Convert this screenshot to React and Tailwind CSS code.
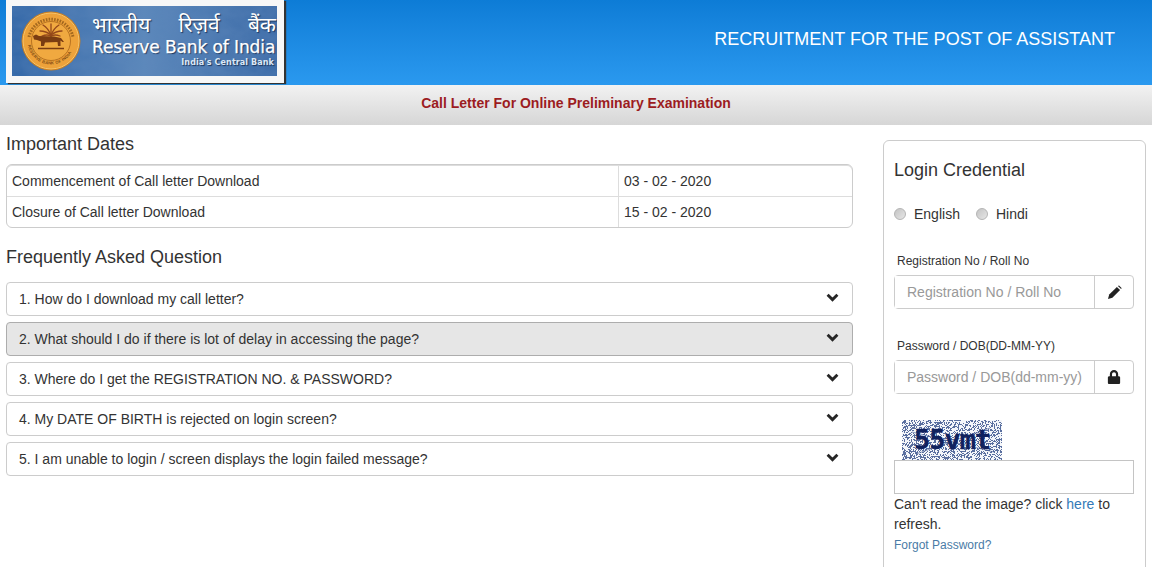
import { FaLock } from "react-icons/fa";

const FAQS = [
  "1. How do I download my call letter?",
  "2. What should I do if there is lot of delay in accessing the page?",
  "3. Where do I get the REGISTRATION NO. & PASSWORD?",
  "4. My DATE OF BIRTH is rejected on login screen?",
  "5. I am unable to login / screen displays the login failed message?",
];

const DATES = [
  ["Commencement of Call letter Download", "03 - 02 - 2020"],
  ["Closure of Call letter Download", "15 - 02 - 2020"],
];

// fixed pseudo random speckle for the captcha
const SPECKLE = [];
let seed = 12345;
for (let y = 0; y < 40; y++) {
  for (let x = 0; x < 100; x++) {
    seed = (seed * 1103515245 + 12345) & 0x7fffffff;
    if ((seed >> 16) % 100 < 42) SPECKLE.push([x, y]);
  }
}

function Seal() {
  return (
    <svg width="60" height="60" viewBox="0 0 60 60" className="shrink-0">
      <defs>
        <path id="ring-bottom" d="M6.5 30 A23.5 23.5 0 0 0 53.5 30" fill="none" />
      </defs>
      <circle cx="30" cy="30" r="29.5" fill="#c97f22" />
      <circle cx="30" cy="30" r="28" fill="#eda23a" stroke="#f7c56c" strokeWidth="1" />
      <circle cx="30" cy="30" r="19.5" fill="#f0a940" stroke="#a9661a" strokeWidth="0.8" />
      <text fontSize="4.2" fontWeight="700" fill="#7d4a12" fontFamily="Liberation Sans, sans-serif" letterSpacing="0.2">
        <textPath href="#ring-bottom" startOffset="6%">RESERVE BANK OF INDIA</textPath>
      </text>
      <path d="M8 26 A22.5 22.5 0 0 1 52 26" fill="none" stroke="#8a5416" strokeWidth="3" strokeDasharray="1.6 1.2" opacity="0.75" />
      <g stroke="#94481a" strokeWidth="1.3" fill="none" strokeLinecap="round">
        <path d="M30 25 L30 13" />
        <path d="M30 24 Q27 17 22 14" />
        <path d="M30 24 Q33 17 38 14" />
        <path d="M30 24 Q25 20 19 20" />
        <path d="M30 24 Q35 20 41 20" />
        <path d="M30 25 Q26 23 21 25" />
        <path d="M30 25 Q34 23 39 25" />
      </g>
      <path
        d="M12 25 L15 23.5 L18 25 L33 25.5 L40 27 L43 31 L41.5 31 L39.5 29.5 L39.5 35 L37 35 L36.5 31 L24 31.5 L23 35 L20 35 L20 30.5 L16 29 L13 28.5 Z"
        fill="#7a3c12"
      />
      <path d="M17 37.5 H43" stroke="#7a3c12" strokeWidth="1.5" />
    </svg>
  );
}

function Logo() {
  return (
    <div className="ml-[6px] h-[83px] w-[278px] bg-[#f7f7f7] pl-[6px] pt-[6px] shadow-[2px_1px_1px_#333]">
      <div className="relative flex h-[70px] w-[265px] items-center overflow-hidden bg-gradient-to-r from-[#3468a8] via-[#5c88bb] to-[#3d6ca8] pl-[9px]">
        <svg width="265" height="70" className="absolute inset-0 opacity-30">
          <filter id="mottle">
            <feTurbulence type="fractalNoise" baseFrequency="0.06 0.09" numOctaves="3" seed="4" />
            <feColorMatrix values="0 0 0 0 0.12  0 0 0 0 0.25  0 0 0 0 0.5  1.6 0 0 0 -0.3" />
          </filter>
          <rect width="265" height="70" filter="url(#mottle)" />
        </svg>
        <div className="relative">
          <Seal />
        </div>
        <div className="relative ml-[11px] w-[184px] pt-[4px] text-white [text-shadow:1px_1px_1px_#1c355c]">
          <div className="flex justify-between text-[21px] leading-[21px] font-['Noto_Sans_Devanagari','Noto_Sans',sans-serif]">
            <span>भारतीय</span>
            <span>रिज़र्व</span>
            <span>बैंक</span>
          </div>
          <div className="whitespace-nowrap text-[17px] leading-[19px] font-['DejaVu_Sans',sans-serif] tracking-[-0.1px] [-webkit-text-stroke:0.25px_#fff]">
            Reserve Bank of India
          </div>
          <div className="pr-[2px] text-right text-[8px] leading-[12px] font-['DejaVu_Sans',sans-serif] font-bold tracking-[0.1px] text-[#dce8f6]">
            India's Central Bank
          </div>
        </div>
      </div>
    </div>
  );
}

function Captcha() {
  return (
    <div className="relative ml-[8px] h-[40px] w-[100px] overflow-hidden bg-[#f4f6fa]">
      <svg width="100" height="40" className="absolute inset-0">
        {SPECKLE.map(([x, y]) => (
          <rect key={`${x}-${y}`} x={x} y={y} width="1" height="1" fill="#5a6f9f" />
        ))}
        <path d="M10 12 L92 32 M14 34 L88 8" stroke="#3d5590" strokeWidth="1" opacity="0.6" />
      </svg>
      <span className="absolute left-[12px] top-[4px] font-['DejaVu_Sans_Mono',monospace] text-[27px] leading-[32px] font-bold tracking-[-1px] text-[#10225e] [-webkit-text-stroke:0.3px_#10225e]">
        55vmt
      </span>
    </div>
  );
}

function Chevron() {
  return (
    <svg width="13" height="9" viewBox="0 0 13 9" className="mb-[4px] shrink-0">
      <path d="M1.6 1.8 L6.5 6.6 L11.4 1.8" fill="none" stroke="#262626" strokeWidth="2.9" />
    </svg>
  );
}

function Pencil() {
  return (
    <svg width="15" height="15" viewBox="0 0 15 15">
      <path d="M1 14 L2.2 9.6 L9.9 1.9 L13.1 5.1 L5.4 12.8 Z" fill="#222" />
      <path d="M10.9 0.9 L12 0.4 L14.6 3 L14.1 4.1 Z" fill="#222" />
    </svg>
  );
}

function InputGroup({ placeholder, icon }) {
  return (
    <div className="flex h-[34px] w-[240px] rounded border border-[#ccc]">
      <input
        placeholder={placeholder}
        className="w-[199px] min-w-0 bg-white px-3 text-[14px] outline-none placeholder:text-[#999]"
      />
      <div className="flex flex-1 items-center justify-center border-l border-[#ccc] text-[14px] text-[#222]">{icon}</div>
    </div>
  );
}

function Radio({ label }) {
  return (
    <label className="flex items-center gap-[8px]">
      <span className="h-[12px] w-[12px] rounded-full border border-[#b4b4b4] bg-gradient-to-br from-[#c4c4c4] to-[#e6e6e6]" />
      {label}
    </label>
  );
}

export default function App() {
  return (
    <div className="h-[567px] overflow-hidden bg-white font-['Liberation_Sans',Arial,sans-serif] text-[14px] leading-[20px] text-[#333]">
      <header className="flex h-[85px] items-start justify-between bg-gradient-to-b from-[#0d7cd6] to-[#2a99ef]">
        <Logo />
        <h1 className="mt-[29px] mr-[37px] text-[18px] leading-[20px] text-white">RECRUITMENT FOR THE POST OF ASSISTANT</h1>
      </header>

      <div className="flex h-[40px] items-center justify-center bg-gradient-to-b from-[#f2f2f2] to-[#d6d6d6] pb-[4px] text-[14px] font-bold text-[#9c1c1f]">
        Call Letter For Online Preliminary Examination
      </div>

      <main className="flex items-start">
        <section className="ml-[6px] w-[847px]">
          <h2 className="mt-[9px] h-[20px] text-[18px] leading-[20px]">Important Dates</h2>
          <div className="mt-[10px] overflow-hidden rounded-md border border-[#ccc] shadow-[inset_0_1px_0_#ddd]">
            {DATES.map(([name, date], i) => (
              <div key={name} className={`flex h-[31px] items-center ${i ? "border-t border-[#ddd]" : ""}`}>
                <div className="flex h-full w-[612px] items-center border-r border-[#ddd] pl-[5px]">{name}</div>
                <div className="pl-[5px]">{date}</div>
              </div>
            ))}
          </div>

          <h2 className="mt-[19px] h-[20px] text-[18px] leading-[20px]">Frequently Asked Question</h2>
          <div className="mt-[15px] flex flex-col gap-[6px]">
            {FAQS.map((q, i) => (
              <div
                key={q}
                className={`flex h-[34px] items-center justify-between rounded border pl-[12px] pr-[13px] ${
                  i === 1 ? "border-[#adadad] bg-[#e6e6e6]" : "border-[#ccc] bg-white"
                }`}
              >
                {q}
                <Chevron />
              </div>
            ))}
          </div>
        </section>

        <aside className="mt-[15px] ml-[30px] h-[500px] w-[263px] rounded-md border border-[#ccc] px-[10px] pt-[18px]">
          <h2 className="h-[22px] text-[18px] leading-[22px]">Login Credential</h2>
          <div className="mt-[23px] flex gap-[16px]">
            <Radio label="English" />
            <Radio label="Hindi" />
          </div>
          <label className="mt-[29px] mb-[5px] block pl-[3px] text-[12px] leading-[17px]">Registration No / Roll No</label>
          <InputGroup placeholder="Registration No / Roll No" icon={<Pencil />} />
          <label className="mt-[29px] mb-[5px] block pl-[3px] text-[12px] leading-[17px]">Password / DOB(DD-MM-YY)</label>
          <InputGroup placeholder="Password / DOB(dd-mm-yy)" icon={<FaLock />} />
          <div className="mt-[26px]">
            <Captcha />
          </div>
          <input className="block h-[34px] w-[240px] border border-[#c4c4c4] outline-none" />
          <p>
            Can't read the image? click <a className="text-[#337ab7]">here</a> to refresh.
          </p>
          <a className="mt-[1px] block text-[12px] leading-[20px] text-[#4a7ba6]">Forgot Password?</a>
        </aside>
      </main>
    </div>
  );
}
